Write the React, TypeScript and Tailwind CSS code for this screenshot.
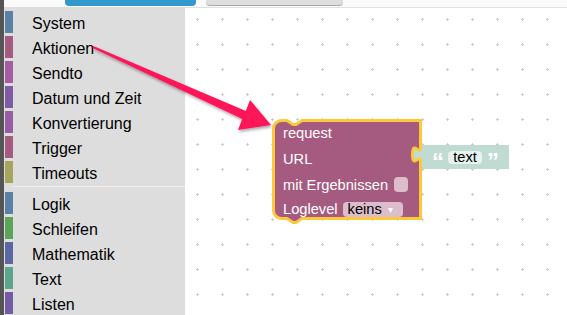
import React from 'react';

const categories = [
  { name: 'System', color: '#5b80a5' },
  { name: 'Aktionen', color: '#a55b80' },
  { name: 'Sendto', color: '#a55ba5' },
  { name: 'Datum und Zeit', color: '#805ba5' },
  { name: 'Konvertierung', color: '#995ba5' },
  { name: 'Trigger', color: '#a55b80' },
  { name: 'Timeouts', color: '#a5a55b' },
];

const basics = [
  { name: 'Logik', color: '#5b80a5' },
  { name: 'Schleifen', color: '#5ba55b' },
  { name: 'Mathematik', color: '#5b67a5' },
  { name: 'Text', color: '#5ba58c' },
  { name: 'Listen', color: '#745ba5' },
];

function CategoryRow({ name, color }: { name: string; color: string }) {
  return (
    <div className="mb-[3px] flex h-[22px]">
      <div className="ml-[1px] w-[8px] shrink-0" style={{ backgroundColor: color }} />
      <span className="ml-[19px] h-[22px] whitespace-nowrap pt-[1px] text-[16px] leading-[24px] text-black">{name}</span>
    </div>
  );
}

function Sidebar() {
  return (
    <div className="w-[181px] shrink-0 bg-[#dddddd] pt-[4px]">
      {categories.map((c) => (
        <CategoryRow key={c.name} {...c} />
      ))}
      <div className="mb-[5px] ml-[8px] mt-[2px] h-px bg-[#efefef]" />
      {basics.map((c) => (
        <CategoryRow key={c.name} {...c} />
      ))}
    </div>
  );
}

function Grid() {
  return (
    <svg className="absolute inset-0 h-full w-full">
      <defs>
        <pattern id="grid" width="25" height="25" patternUnits="userSpaceOnUse">
          <rect x="11" y="11" width="3" height="1" fill="#cccccc" />
          <rect x="12" y="10" width="1" height="3" fill="#cccccc" />
        </pattern>
      </defs>
      <rect width="100%" height="100%" fill="url(#grid)" />
    </svg>
  );
}

function RequestBlock() {
  // block outline: notch on top, next tab below, value input cut-out on the right
  const body =
    'M1.5,9.5 A8,8 0 0 1 9.5,1.5 H15 l6,4 3,0 6,-4 H148.5 V28 c0,10 -8,-8 -8,7.5 s8,-2.5 8,7.5 V99.5 H30 l-6,4 -3,0 -6,-4 H9.5 A8,8 0 0 1 1.5,91.5 Z';
  const textBlock = 'M237,26 H148 V28 c0,10 -8,-8 -8,7.5 s8,-2.5 8,7.5 V50 H237 Z';

  return (
    <div className="absolute left-[87px] top-[111px] h-[101px] w-[150px]">
      <svg className="absolute left-0 top-0 overflow-visible" width="240" height="110">
        <path d={textBlock} fill="#c0dcd2" />
        <path d={body} fill="#a55b80" stroke="#fcc93c" strokeWidth="3" strokeLinejoin="round" />
      </svg>

      <div className="relative flex flex-col pl-[11px] text-[14.67px] text-white">
        <div className="flex h-[26px] items-center pt-[2px]">request</div>
        <div className="flex h-[26px] items-center pt-[1px]">URL</div>
        <div className="flex h-[27px] items-center">
          <span>mit Ergebnissen</span>
          <span className="ml-[6px] h-[15px] w-[14px] rounded-[4px] bg-[#dbbdcc]" />
        </div>
        <div className="flex h-[22px] items-center">
          <span>Loglevel</span>
          <span className="ml-[5px] flex h-[15px] w-[60px] items-center rounded-[4px] bg-[#dbbdcc] pl-[5px] leading-[15px] text-black">
            keins
            <span className="ml-[6px] text-[10px] text-white">▾</span>
          </span>
        </div>
      </div>

      <div className="absolute left-[148px] top-[26px] flex h-[24px] w-[89px] items-center pl-[12px]">
        <span className="mt-[5px] w-[10px] self-start text-[24px] font-bold leading-[24px] text-white">“</span>
        <span className="ml-[6px] flex h-[13px] w-[34px] items-center justify-center rounded-[4px] bg-[#e8f2ee] text-[14.67px] leading-[13px] text-black">
          text
        </span>
        <span className="ml-[5px] mt-[5px] w-[10px] self-start text-[24px] font-bold leading-[24px] text-white">”</span>
      </div>
    </div>
  );
}

function Workspace() {
  return (
    <div className="relative flex-1 overflow-hidden border-t border-[#e0e0e0] bg-white">
      <Grid />
      <RequestBlock />
    </div>
  );
}

function Arrow() {
  return (
    <svg className="pointer-events-none absolute left-0 top-0" width="567" height="315">
      <defs>
        <filter id="arrowShadow" x="-10%" y="-10%" width="120%" height="130%">
          <feDropShadow dx="1" dy="2" stdDeviation="1.5" floodColor="#000000" floodOpacity="0.35" />
        </filter>
      </defs>
      <polygon
        points="93.4,46.1 245.8,110.9 250,100 271,125 238,130 242.2,119.1 92.6,47.9"
        fill="#ff1458"
        filter="url(#arrowShadow)"
      />
    </svg>
  );
}

export default function App() {
  return (
    <div className="relative flex h-[315px] w-[567px] overflow-hidden bg-white font-['Liberation_Sans',Arial,sans-serif]">
      <div className="w-[4px] shrink-0 bg-[#555555]" />
      <div className="flex min-w-0 flex-1 flex-col">
        <div className="flex h-[7px] shrink-0 bg-[#fafafa]">
          <div className="ml-[61px] h-[6px] w-[131px] rounded-b-[4px] bg-[#3399cc]" />
          <div className="ml-[10px] h-[6px] w-[137px] rounded-b-[4px] border-b border-[#a8a8a8] bg-[#dedede]" />
        </div>
        <div className="flex flex-1">
          <Sidebar />
          <Workspace />
        </div>
      </div>
      <Arrow />
    </div>
  );
}
